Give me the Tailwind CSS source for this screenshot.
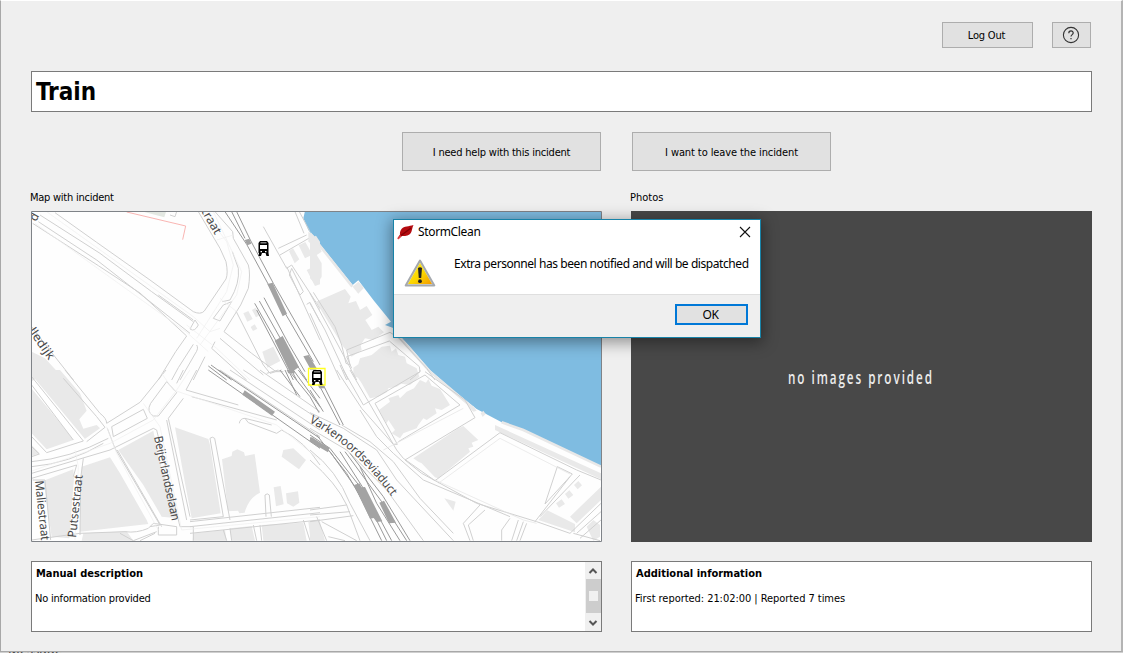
<!DOCTYPE html>
<html lang="en">
<head>
<meta charset="utf-8">
<title>StormClean</title>
<script src="https://cdn.jsdelivr.net/npm/@tailwindcss/browser@4"></script>
</head>
<body class="w-[1123px] h-[653px] overflow-hidden bg-[#cfcfcf] font-['DejaVu_Sans_Condensed','DejaVu_Sans',sans-serif] text-[11px] leading-[14px] text-black">
<div class="relative w-[1123px] h-[653px] overflow-hidden">
<div class="absolute left-[8px] top-[642px] text-[13px] leading-[14px] text-[#444] font-['Noto_Sans',sans-serif]">Message</div>
<main class="relative w-[1123px] h-[652px] bg-[#efefef] border-l border-r-2 border-b border-[#a8a8a8] border-r-[#b4b4b4] border-t border-t-white pl-[30px] pt-[21px] flex flex-col">
  <div class="flex justify-end gap-[19px] pr-[30px] h-[26px]">
    <button class="w-[91px] h-[26px] pt-0.5 pr-0.5 bg-[#e1e1e1] border border-[#adadad]"><span class="tracking-[-0.2px]">Log Out</span></button>
    <button class="w-[39px] h-[26px] pr-0.5 bg-[#e1e1e1] border border-[#adadad] flex items-center justify-center">
      <svg width="18" height="18" viewBox="0 0 18 18" fill="none" stroke="#333"><circle cx="9" cy="9" r="7.600" stroke-width="1.100"/><path d="M6.800 7.200C6.800 4.200 11.300 4.300 11.200 7C11.200 8.600 9 8.700 9 10.600M9 11.900V13.200" stroke-width="1.200"/></svg>
    </button>
  </div>
  <h1 class="mt-[23px] w-[1061px] h-[41px] bg-white border border-[#7a7a7a] pl-1 pt-px text-[24px] leading-[39px] font-bold"><span>Train</span></h1>
  <div class="mt-5 ml-[371px] flex gap-[31px] h-[39px]">
    <button class="w-[199px] h-[39px] pt-0.5 bg-[#e1e1e1] border border-[#adadad]"><span class="tracking-[-0.2px]">I need help with this incident</span></button>
    <button class="w-[199px] h-[39px] pt-0.5 bg-[#e1e1e1] border border-[#adadad]"><span class="tracking-[-0.1px]">I want to leave the incident</span></button>
  </div>
  <div class="mt-[19px] pt-px flex h-[21px] -ml-px"><div class="w-[600px]"><span class="tracking-[-0.25px]">Map with incident</span></div><div><span>Photos</span></div></div>
  <div class="flex gap-[29px] h-[331px]">
    <svg class="w-[571px] h-[331px] shrink-0 bg-[#fefefe]" viewBox="31 211 571 331" font-family="'Noto Sans',sans-serif" fill="none">
      <!-- water -->
      <g transform="translate(310 205) scale(.33333)">
        <path d="M-15 18L-20 40L-5 75L60 155L128 240L145 226L190 285L243 350L225 360L248 368L300 425L360 495L435 560L500 612L575 652L640 675L873 785V18Z" fill="#7fbce1"/>
        <path d="M0 85L127 245M265 395L360 500L440 568L490 610M575 652L640 675L873 785" stroke="#e8e8e8" stroke-width="8"/>
      </g>
      <!-- buildings and blocks, north-west -->
      <g transform="translate(30 205) scale(.33333)">
        <g fill="#e9e9e9">
          <path d="M5 440L45 460L105 525H5ZM640 325L655 318L668 342L652 350ZM666 315L677 308L690 330L678 337ZM662 366L674 358L682 371L669 378ZM697 440L730 425L751 468L712 488ZM777 138L789 130L808 163L794 175ZM806 121L826 111L847 149L825 160ZM830 195L845 188L854 213L870 207V238L855 243ZM840 100L858 92L870 110V137L857 135ZM860 294L870 288V320Z"/>
          <path d="M340 20H408L403 37Z" fill="#e3e8e2"/>
        </g>
        <path d="M290 21L467 63L458 104" stroke="#f9b5b2" stroke-width="3"/>
        <g stroke="#d0d0d0" stroke-width="3">
          <path d="M75 23L200 112L360 225L490 320Q512 330 523 318L588 222Q595 205 588 170L570 130L505 20"/>
          <path d="M8 55L205 182L330 264L470 393L437 440L385 525"/>
          <path d="M25 50L200 165L350 282L480 385M30 30L210 145L365 260L490 350M385 270L490 345"/>
          <path d="M555 20L608 80L610 100L655 180Q662 205 655 250L632 300L582 380L665 445L738 500H760"/>
          <path d="M607 140L625 190Q630 235 600 285L577 290M580 300L605 290L570 348L550 340L580 300M495 345L480 372Q494 382 505 360Z"/>
          <path d="M618 318L700 480L720 505L755 495M555 410L545 430L650 525M570 400L700 510M525 455L490 525M490 418L445 488L425 525M500 420Q507 430 495 447L450 525M5 365L55 430L130 525"/>
          <path d="M745 130L830 90M750 150L845 95M822 85L795 20M840 80L808 20M700 65L770 190L785 180L870 310M785 190L820 260L810 270L778 210ZM830 298L840 292L870 350M770 185L870 405M420 30L435 35L440 20"/>
        </g>
        <g stroke="#eeeeee" stroke-width="2"><path d="M50 20L490 335L540 380L570 370M15 55L470 382L535 440M522 20L590 110L610 180L590 260L500 400M550 20L635 200L620 270L510 420M470 360L560 430L660 525M570 280L620 320M560 105L610 90"/></g>
        <g stroke="#999" stroke-width="3"><path d="M585 20L650 118L716 240L850 470M620 20L661 105L730 235L870 480M605 20L645 100M674 295L745 420L800 525M688 288L765 425L830 525M702 278L775 415L825 500M680 315L790 525M535 483L590 525M543 480L605 525"/></g>
        <path d="M644 105L658 101L664 116L652 121ZM712 237L728 233L771 326L758 334ZM734 407L758 393L807 486L781 504ZM820 454L836 450L860 490H840Z" fill="#a3a3a3"/>
      </g>
      <!-- harbour blocks, north-east -->
      <g transform="translate(310 205) scale(.33333)">
        <path d="M0 112L20 100L35 140L20 150L35 175V215L20 240L0 220ZM-5 80L10 90L25 110L15 125L-5 110ZM128 245L145 230L162 248L145 266ZM18 290L105 252L122 275L115 295L138 288L150 315L170 303L187 330L166 345L185 375L205 365L222 382L190 405L165 400L152 420L155 435L125 455L100 425ZM130 488L145 478L150 460L185 450L215 425L240 422L245 440L258 430L265 450L285 455L290 475L320 490L328 515L300 540L130 515Z" fill="#e9e9e9"/>
        <g stroke="#d0d0d0" stroke-width="3"><path d="M0 265L60 375L140 525M0 295L45 375L115 525M0 325L90 525M10 262L75 365L95 420L108 475L120 480L110 435L240 382L268 400M125 490L110 455L238 408L328 485L330 500L300 525M268 400L350 490L375 525M90 480L110 525"/></g>
        <path d="M0 460L20 495H0Z" fill="#a3a3a3"/>
      </g>
      <!-- blocks and streets, south-west -->
      <g transform="translate(30 370) scale(.33333)">
        <path d="M5 0H90L150 70L170 122L148 148L160 176L200 165L210 175L160 210L5 30ZM5 50L130 210L50 238L5 190ZM5 225L28 250L5 258ZM8 345L130 298L132 325L118 505L65 500L40 330ZM155 290L240 262L270 310L350 450L355 462L150 485ZM265 240L370 182L385 260L445 445L395 440L340 345ZM435 172L535 207L540 225L572 430L485 445L465 340ZM576 268L605 258L607 245L622 238L642 247L645 258L674 252L690 368Q655 385 644 428L628 430L624 422L594 424ZM760 240L790 235L828 270L807 298L755 260ZM731 352L752 348L761 403L738 409ZM768 370L804 364L808 398L790 410L771 400ZM160 490L290 484L310 512H155ZM600 475L665 468L675 512H605ZM695 465L820 458L830 512H700ZM835 455L870 450V512H842ZM490 490L585 480L590 512H488Z" fill="#e9e9e9"/>
        <path d="M5 35L155 215" stroke="#fff" stroke-width="26"/>
        <g stroke="#d0d0d0" stroke-width="3">
          <path d="M5 20L160 213L50 248L5 200M5 45L130 210M5 230L28 252L5 260M105 0L210 130Q230 145 230 160L330 97L360 60L408 0M100 25L200 140L225 172L170 215M5 275Q120 265 235 205M5 290Q120 280 220 220M5 310L240 240L370 175L380 180L450 470M5 325L140 285L130 320M160 265L152 325L150 495M8 330H45L62 510M245 170L340 118L352 145L250 200ZM410 35L362 100Q348 125 370 138L385 138L440 68ZM460 0L440 40M500 0L468 60L625 105M460 85L415 145L480 440M410 150L470 450M232 175L255 235L390 465L360 470M262 240L395 470M540 205Q547 198 554 205L600 450M540 205L580 440L480 450M705 375Q712 368 718 375L724 440M705 375L708 440M485 80L740 150M628 160Q630 145 645 145L655 158L740 190L755 180Q825 215 870 285M645 145L725 165M480 455L870 412M480 470L870 428M480 490L870 450M5 510L150 490L285 485Q320 490 355 475L370 460L440 470V495H385V470M310 512L380 485M600 475L605 512M580 480L590 512M670 465L680 512M690 465L695 512M820 450L840 512M450 470H490V512M330 512L375 490M270 490L310 512"/>
          <path d="M570 0L870 200M600 0L870 180M640 0L870 150M690 0L870 125M710 10L745 0"/>
        </g>
        <g stroke="#eee" stroke-width="2"><path d="M0 305L240 220L370 150L440 60L480 0M230 170L260 250L385 480M395 10L430 60L740 165L870 270M340 100L390 170L455 480L870 440M135 240L145 290L135 510"/></g>
        <g stroke="#999" stroke-width="3"><path d="M535 0L870 235M565 0L870 205M750 0L810 80M775 0L840 80L867 128M790 0L870 110M805 0L870 85M765 0L800 75"/></g>
        <path d="M644 61L735 125L726 137L637 74ZM845 201L870 218V234L838 212ZM770 0H790L795 10H775Z" fill="#a3a3a3"/>
      </g>
      <!-- quays, blocks and rail yard, south-east -->
      <g transform="translate(310 370) scale(.33333)">
        <path d="M135 10V0H320V12L260 50L235 55L230 67L205 80L180 85L155 40ZM207 120L240 95L235 85L265 75L270 85L290 65L312 55L330 30L348 38L355 27L365 47L390 57L420 105L395 120L375 115L380 130L350 150L340 145L325 165L320 175L280 190L270 205L245 190L255 180L235 150L230 160L220 145ZM310 265L445 175L460 168L505 210L485 218L490 230L475 235L480 245L385 325L375 322L335 280L325 275ZM403 385L437 395L430 422ZM738 400L755 388L765 402L747 413ZM765 372L778 361L790 375L775 386ZM792 345L805 333L816 346L803 358ZM780 440L873 350V390L800 460ZM712 421L795 462V487L685 450ZM830 470L850 450L870 465V500L850 512ZM0 470L30 455L45 512H0ZM555 165L873 310V328L555 180ZM512 130L520 122L527 132L518 141ZM475 110L490 108L500 122L490 125Z" fill="#e9e9e9"/>
        <g stroke="#d0d0d0" stroke-width="3">
          <path d="M80 0L155 115L250 223H262L195 100L345 15L450 105L265 215M100 0L160 105L330 5V0M120 0L260 240L280 265L375 332L570 188L800 300L873 330M345 5L465 90L495 143L285 270L335 310L500 400L680 455L780 490L873 400M150 120L200 200L250 250L340 330L600 440M742 290L787 312L705 402ZM780 320L675 455M810 315L690 440M510 405L460 460L480 512M525 420L475 465L490 512M600 445L575 480V512M625 450L605 512M640 455L620 512M650 460L630 512M800 490L873 425M810 505L873 450M790 490L870 512"/>
          <path d="M0 128L100 175L200 240L260 330L430 512M95 165L180 215L250 275L330 385L430 490M0 175L110 240L230 360L340 512M0 240Q80 300 120 400L180 512M0 270Q80 340 110 405L150 512M0 420L110 405M0 435L120 425M0 455L130 437M20 440L50 512M35 455L140 512M55 500L105 512"/>
        </g>
        <path d="M385 340L570 205L780 312M375 330L640 450L680 460M220 240L460 115" stroke="#e2e2e2" stroke-width="2"/>
        <g stroke="#999" stroke-width="3"><path d="M0 205L60 245L135 350L215 512M0 195L60 235L150 350L230 512M90 245L160 355L245 512M105 245L215 395L290 512M120 250L220 380L300 512M0 60L40 125M30 50L90 165M40 45L100 165M150 290L200 400L270 512M20 195L110 310L180 430"/></g>
        <path d="M0 201L58 233L54 247L0 215ZM132 345L148 340L155 352L165 351L217 454L200 456L191 444L180 446ZM208 398L222 392L258 458L237 460ZM22 42H40L45 55H28Z" fill="#a3a3a3"/>
      </g>
      <!-- street names -->
      <g fill="#484848" font-size="12">
        <path id="via" d="M309 422Q357 448 394 500" fill="none"/>
        <text textLength="112" lengthAdjust="spacingAndGlyphs"><textPath href="#via">Varkenoordseviaduct</textPath></text>
        <text transform="translate(154 437) rotate(78)" textLength="86" lengthAdjust="spacingAndGlyphs">Beijerlandselaan</text>
        <text transform="translate(35 481) rotate(84)" textLength="60" lengthAdjust="spacingAndGlyphs">Maliestraat</text>
        <text transform="translate(76 538) rotate(-84)" textLength="63" lengthAdjust="spacingAndGlyphs">Putsestraat</text>
        <text transform="translate(28 331) rotate(55)" textLength="36" lengthAdjust="spacingAndGlyphs">lledijk</text>
        <text transform="translate(201 211) rotate(60)" textLength="28" lengthAdjust="spacingAndGlyphs">traat</text>
        <text transform="translate(36 222) rotate(-62)">d</text>
      </g>
      <!-- train markers -->
      <path d="M308.500 368.500H325V385H308.500Z" stroke="#ffff20" stroke-width="1.300" fill="#fff" fill-opacity=".35"/>
      <g id="train" fill="#000"><path d="M260 241H267L268.500 243V253H258.500V243Z"/><path d="M260.500 242.400H266.500V243.200H260.500ZM260 245H267V249H260Z" fill="#fff"/><path d="M260.500 251H262V252.300H260.500ZM265 251H266.500V252.300H265Z" fill="#fff"/><path d="M259 253H262L261 256H258.500ZM265.500 253H268.500L269 256H266.500Z"/></g>
      <use href="#train" x="53.500" y="129"/>
      <path d="M31.500 211.500H601.500V541.500H31.500Z" stroke="#7f8388"/>
    </svg>
    <div class="w-[461px] h-[331px] bg-[#484848] shrink-0 flex items-center justify-center">
      <svg width="150" height="26" viewBox="0 0 150 26"><text x="0" y="0" font-family="'Open Sans',sans-serif" font-size="18" font-weight="600" fill="#ececec" letter-spacing="2.400" textLength="224" lengthAdjust="spacing" transform="translate(1 19.500) scale(.65 1)">no images provided</text></svg>
    </div>
  </div>
  <div class="mt-[19px] flex gap-[29px] h-[71px]">
    <section class="w-[571px] h-[71px] bg-white border border-[#7a7a7a] flex justify-between">
      <div class="pl-1 pt-[5px]"><div class="font-bold"><span>Manual description</span></div><div class="mt-[11px] -ml-px"><span class="tracking-[-0.2px]">No information provided</span></div></div>
      <div class="w-[16px] bg-[#f0f0f0] flex flex-col items-center">
        <svg width="16" height="17" viewBox="0 0 16 17" fill="none" stroke="#555" stroke-width="2"><path d="M4.500 11L8 7.500L11.500 11"/></svg>
        <div class="w-[15px] h-[34px] bg-[#cdcdcd] flex items-center justify-center"><div class="w-[9px] h-[10px] bg-[#f0f0f0]"></div></div>
        <svg width="16" height="18" viewBox="0 0 16 18" fill="none" stroke="#555" stroke-width="2"><path d="M4.500 8L8 11.500L11.500 8"/></svg>
      </div>
    </section>
    <section class="w-[461px] h-[71px] bg-white border border-[#7a7a7a] pl-1 pt-[5px]"><div class="font-bold"><span>Additional information</span></div><div class="mt-[11px] -ml-px"><span class="tracking-[-0.05px]">First reported: 21:02:00 | Reported 7 times</span></div></section>
  </div>
</main>
<!-- modal dialog -->
<div role="dialog" class="absolute left-[393px] top-[219px] w-[368px] h-[119px] bg-white border border-[#1883a8] shadow-[0_3px_14px_2px_rgba(0,0,0,0.38)] flex flex-col">
  <div class="flex items-center h-[24px] pl-[3px] pr-[9px]">
    <svg width="17" height="17" viewBox="0 0 17 17"><path d="M16.500 1C12 2.500 7 2 4.500 5C3 7 2.800 9 3 10.500L.5 14L1.500 15L5 12C9 12.500 13 11.500 14.500 7.500C15.300 5 15.500 3 16.500 1Z" fill="#b40b10"/><path d="M14 4L4 11.500" stroke="#850006" stroke-width="1.500"/><path d="M.8 15L4 11.800" stroke="#e0464a" stroke-width="1.500"/></svg>
    <div class="ml-[4px] text-[12px] grow font-['Noto_Sans',sans-serif]"><span class="tracking-[-0.35px]">StormClean</span></div>
    <svg width="12" height="12" viewBox="0 0 12 12" stroke="#111" stroke-width="1.100"><path d="M1 1L11 11M11 1L1 11"/></svg>
  </div>
  <div class="flex h-[51px] pl-[10px] border-b border-[#dfdfdf]">
    <svg class="mt-[14px] shrink-0" width="32" height="30" viewBox="0 0 32 30"><defs><linearGradient id="y" x1="0" y1="0" x2="1" y2="1"><stop offset="0" stop-color="#ffee20"/><stop offset=".55" stop-color="#fbd600"/><stop offset="1" stop-color="#f39a00"/></linearGradient></defs><path d="M16 2.500L30.300 27.500H1.700Z" fill="#ddd" stroke="#a5a9ae" stroke-width="2" stroke-linejoin="round"/><path d="M16 5L28 26H4Z" fill="url(#y)"/><path d="M14 10Q16 8.500 18 10L17.200 20H14.800Z" fill="#222"/><circle cx="16" cy="23.200" r="1.900" fill="#222"/></svg>
    <div class="ml-[18px] mt-[13px] text-[12px] whitespace-nowrap font-['Noto_Sans',sans-serif]"><span class="tracking-[-0.43px]">Extra personnel has been notified and will be dispatched</span></div>
  </div>
  <div class="grow bg-[#efefef] flex justify-end pt-[9px] pr-[12px]"><button class="w-[73px] h-[21px] pt-px pr-0.5 bg-[#e1e1e1] border-2 border-[#0078d7] text-[12px] leading-[14px] font-['Noto_Sans',sans-serif]"><span class="tracking-[-0.5px]">OK</span></button></div>
</div>
</div>
</body>
</html>
